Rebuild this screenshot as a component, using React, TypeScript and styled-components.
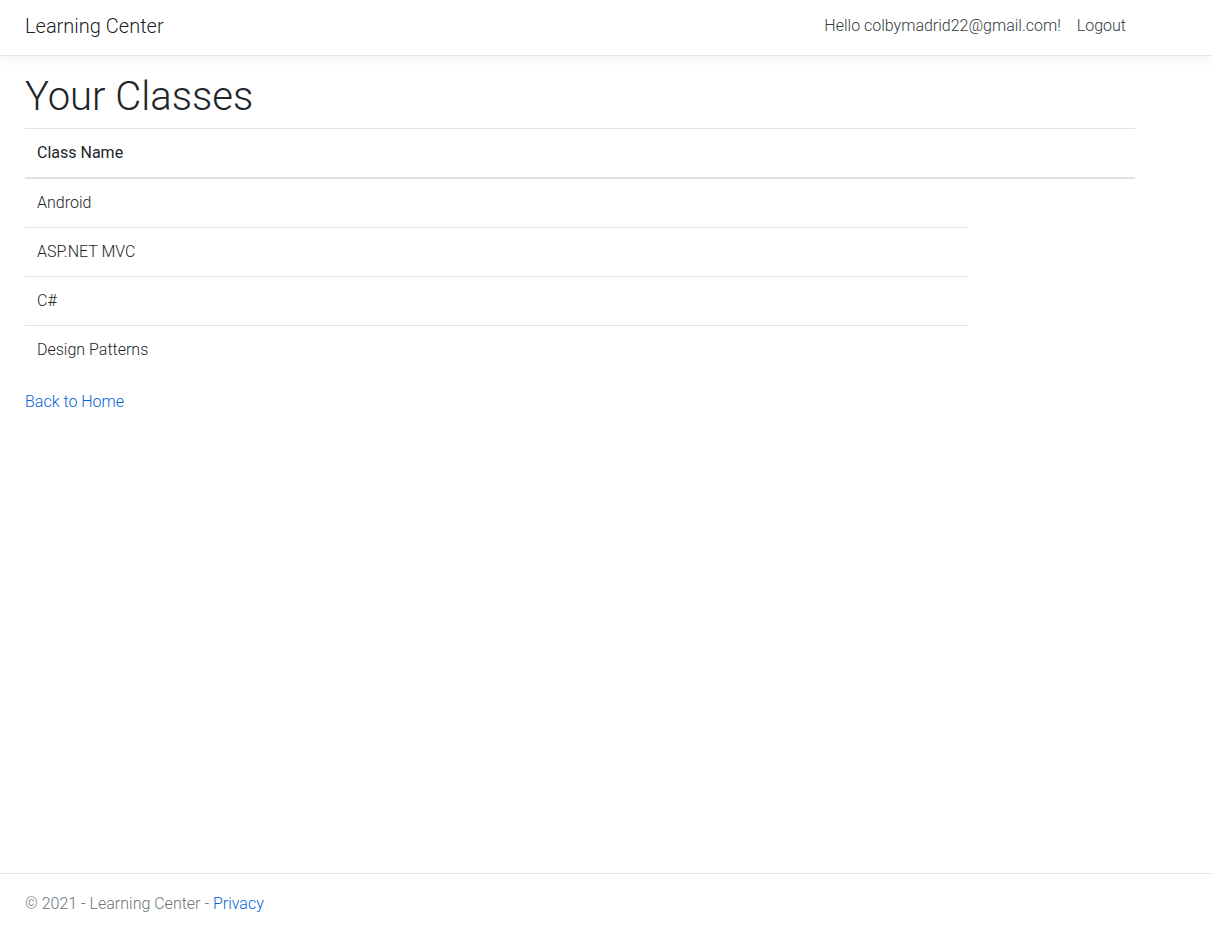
import React from "react";
import styled, { createGlobalStyle } from "styled-components";

const GlobalStyle = createGlobalStyle`
  html, body {
    margin: 0;
    padding: 0;
    height: 100%;
    overflow: hidden;
    background: #fff;
  }
  body {
    font-family: Roboto, "Liberation Sans", sans-serif;
    font-weight: 300;
    font-size: 16px;
    line-height: 1.5;
    color: #212529;
  }
  * { box-sizing: border-box; }
`;

const Page = styled.div`
  height: 100vh;
  display: flex;
  flex-direction: column;
`;

const Header = styled.header`
  height: 56px;
  border-bottom: 1px solid #e5e5e5;
  box-shadow: 0 4px 12px rgba(0, 0, 0, 0.05);
  flex: none;
`;

const Container = styled.div`
  width: 1110px;
  margin-left: 25px;
`;

const NavBar = styled(Container)`
  height: 55px;
  display: flex;
  align-items: center;
  justify-content: space-between;
`;

const Brand = styled.a`
  font-size: 20px;
  line-height: 30px;
  color: rgba(0, 0, 0, 0.9);
  text-decoration: none;
  margin-top: -3px;
`;

const NavList = styled.ul`
  list-style: none;
  margin: -4px 1px 0 0;
  padding: 0;
  display: flex;
`;

const NavLink = styled.a`
  display: block;
  padding: 8px;
  color: #343a40;
  text-decoration: none;
  font-size: 16px;
  line-height: 24px;
`;

const Main = styled.main`
  flex: 1;
  padding-top: 17px;
`;

const Title = styled.h1`
  margin: 0 0 7px;
  font-size: 40px;
  font-weight: 300;
  line-height: 1.2;
  color: #212529;
`;

const Table = styled.table`
  width: 100%;
  border-collapse: collapse;
  margin-bottom: 16px;
  color: #212529;
`;

const HeadCell = styled.th<{ $wide?: boolean }>`
  text-align: left;
  font-weight: 400;
  padding: 12px;
  line-height: 24px;
  border-top: 1px solid #dee2e6;
  border-bottom: 2px solid #dee2e6;
  width: ${(p) => (p.$wide ? "943px" : "auto")};
`;

const Cell = styled.td<{ $first?: boolean }>`
  padding: 12px;
  line-height: 24px;
  border-top: ${(p) => (p.$first ? "none" : "1px solid #dee2e6")};
`;

const Link = styled.a`
  color: #0366d6;
  text-decoration: none;
`;

const Footer = styled.footer`
  height: 53px;
  flex: none;
  border-top: 1px solid #e5e5e5;
  line-height: 60px;
  color: #6c757d;
  white-space: nowrap;
`;

const classes = ["Android", "ASP.NET MVC", "C#", "Design Patterns"];

export default function App() {
  return (
    <Page>
      <GlobalStyle />
      <Header>
        <NavBar>
          <Brand href="#">Learning Center</Brand>
          <NavList>
            <li>
              <NavLink href="#">Hello colbymadrid22@gmail.com!</NavLink>
            </li>
            <li>
              <NavLink href="#">Logout</NavLink>
            </li>
          </NavList>
        </NavBar>
      </Header>
      <Main>
        <Container>
          <Title>Your Classes</Title>
          <Table>
            <thead>
              <tr>
                <HeadCell $wide>Class Name</HeadCell>
                <HeadCell></HeadCell>
              </tr>
            </thead>
            <tbody>
              {classes.map((c, i) => (
                <tr key={c}>
                  <Cell $first={i === 0}>{c}</Cell>
                </tr>
              ))}
            </tbody>
          </Table>
          <Link href="#">Back to Home</Link>
        </Container>
      </Main>
      <Footer>
        <Container>
          © 2021 - Learning Center - <Link href="#">Privacy</Link>
        </Container>
      </Footer>
    </Page>
  );
}
